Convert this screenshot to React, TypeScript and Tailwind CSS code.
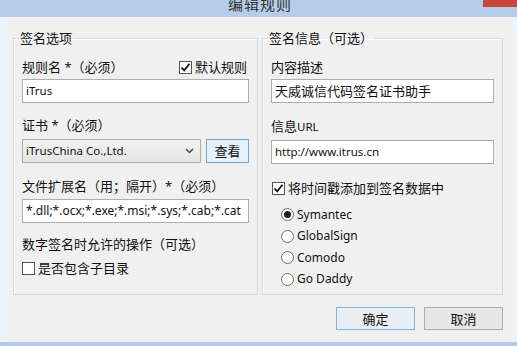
import React from 'react';

const font = "font-['Noto_Sans','Noto_Sans_CJK_SC',sans-serif]";

const Check = ({ checked, label }: { checked: boolean; label: string }) => (
  <div className="flex h-4 items-center gap-[3px] leading-4">
    <span className="flex h-[13px] w-[13px] items-center justify-center border border-[#555] bg-white">
      {checked && (
        <svg width="11" height="11" viewBox="0 0 11 11">
          <path d="M1.5 5.5 L4.2 8.3 L9.5 1.8" fill="none" stroke="#111" strokeWidth="1.8" />
        </svg>
      )}
    </span>
    <span className="text-[13px]">{label}</span>
  </div>
);

const Radio = ({ checked, label }: { checked: boolean; label: string }) => (
  <div className="flex h-[21.5px] items-center gap-[3px] pl-[10px]">
    <span className="flex h-[13px] w-[13px] items-center justify-center rounded-full border border-[#707070] bg-white">
      {checked && <span className="h-[7px] w-[7px] rounded-full bg-[#222]" />}
    </span>
    <span className="text-[12px] leading-4 text-[#111]">{label}</span>
  </div>
);

const TextBox = ({ value, cjk }: { value: string; cjk?: boolean }) => (
  <div
    className={`flex h-[24px] min-w-0 items-center overflow-hidden whitespace-nowrap border border-[#abadb3] bg-white pl-[3px] ${cjk ? 'text-[13px]' : 'text-[11.5px]'} leading-4`}
  >
    {value}
  </div>
);

const Button = ({ text, primary }: { text: string; primary?: boolean }) => (
  <button
    className={`flex h-[23px] w-[79px] items-center justify-center border text-[13px] leading-4 ${primary ? 'border-[#7eb4ea] bg-[#e9eef3]' : 'border-[#adadad] bg-[#e6e6e6]'}`}
  >
    {text}
  </button>
);

export default function App() {
  return (
    <div className={`flex h-[346px] w-[517px] flex-col overflow-hidden bg-[#eef3f9] text-[#111] ${font}`}>
      {/* title bar */}
      <div className="relative flex h-[17px] shrink-0 justify-center overflow-hidden bg-[#b5cde8]">
        <span className="-mt-[6px] ml-[3px] text-[15px] leading-5 tracking-[1px] text-[#333]">编辑规则</span>
        <div className="absolute right-0 top-0 h-[7px] w-[34px] bg-[#c7463c]" />
      </div>

      <div className="ml-[7px] mr-[5px] flex flex-1 flex-col bg-[#f0f0f0] pl-[6px] pr-[9px] pt-[13px]">
        <div className="flex gap-[4px]">
          {/* left group */}
          <fieldset className="w-[245px] min-w-0 shrink-0 border border-[#d5d9de] px-[8px] pb-[6px] shadow-[inset_1px_1px_0_#fff]">
            <legend className="-ml-[3px] px-[1px] text-[13px] leading-4">签名选项</legend>
            <div className="mt-[13px] flex items-center justify-between pr-[2px]">
              <span className="text-[13px] leading-4">规则名 *（必须）</span>
              <Check checked label="默认规则" />
            </div>
            <div className="mt-[4px]">
              <TextBox value="iTrus" />
            </div>
            <div className="mt-[14px] text-[13px] leading-4">证书 *（必须）</div>
            <div className="mt-[6px] flex gap-[5px]">
              <div className="flex h-[24px] flex-1 items-center justify-between border border-[#acacac] bg-gradient-to-b from-[#f2f2f2] to-[#e5e5e5] pl-[3px] pr-[6px] text-[11.5px] leading-4">
                <span>iTrusChina Co.,Ltd.</span>
                <svg width="9" height="6" viewBox="0 0 9 6">
                  <path d="M1 1 L4.5 4.5 L8 1" fill="none" stroke="#444" strokeWidth="1.5" />
                </svg>
              </div>
              <button className="flex h-[24px] w-[43px] items-center justify-center border border-[#7aa7cf] bg-[#e5f1fb] text-[13px] leading-4">
                查看
              </button>
            </div>
            <div className="mt-[15px] text-[13px] leading-4">文件扩展名（用；隔开）*（必须）</div>
            <div className="mt-[5px] flex h-[24px] items-center overflow-hidden whitespace-nowrap border border-[#abadb3] bg-white pl-[3px] text-[12px] leading-4">
              *.dll;*.ocx;*.exe;*.msi;*.sys;*.cab;*.cat
            </div>
            <div className="mt-[13px] text-[13px] leading-4">数字签名时允许的操作（可选）</div>
            <div className="mt-[8px]">
              <Check checked={false} label="是否包含子目录" />
            </div>
          </fieldset>

          {/* right group */}
          <fieldset className="min-w-0 flex-1 border border-[#d5d9de] px-[8px] pb-[4px] shadow-[inset_1px_1px_0_#fff]">
            <legend className="-ml-[3px] px-[1px] text-[13px] leading-4">签名信息（可选）</legend>
            <div className="mt-[13px] text-[13px] leading-4">内容描述</div>
            <div className="mt-[4px]">
              <TextBox value="天威诚信代码签名证书助手" cjk />
            </div>
            <div className="mt-[15px] text-[13px] leading-4">
              信息<span className="text-[11.5px]">URL</span>
            </div>
            <div className="mt-[5px]">
              <TextBox value="http://www.itrus.cn" />
            </div>
            <div className="mt-[16px] pl-[1px]">
              <Check checked label="将时间戳添加到签名数据中" />
            </div>
            <div className="mt-[8px] flex flex-col">
              <Radio checked label="Symantec" />
              <Radio checked={false} label="GlobalSign" />
              <Radio checked={false} label="Comodo" />
              <Radio checked={false} label="Go Daddy" />
            </div>
          </fieldset>
        </div>

        <div className="mt-[12px] flex justify-end gap-[9px]">
          <Button text="确定" primary />
          <Button text="取消" />
        </div>
      </div>
      <div className="h-[4px] shrink-0 bg-[#b3cae4]" />
    </div>
  );
}
